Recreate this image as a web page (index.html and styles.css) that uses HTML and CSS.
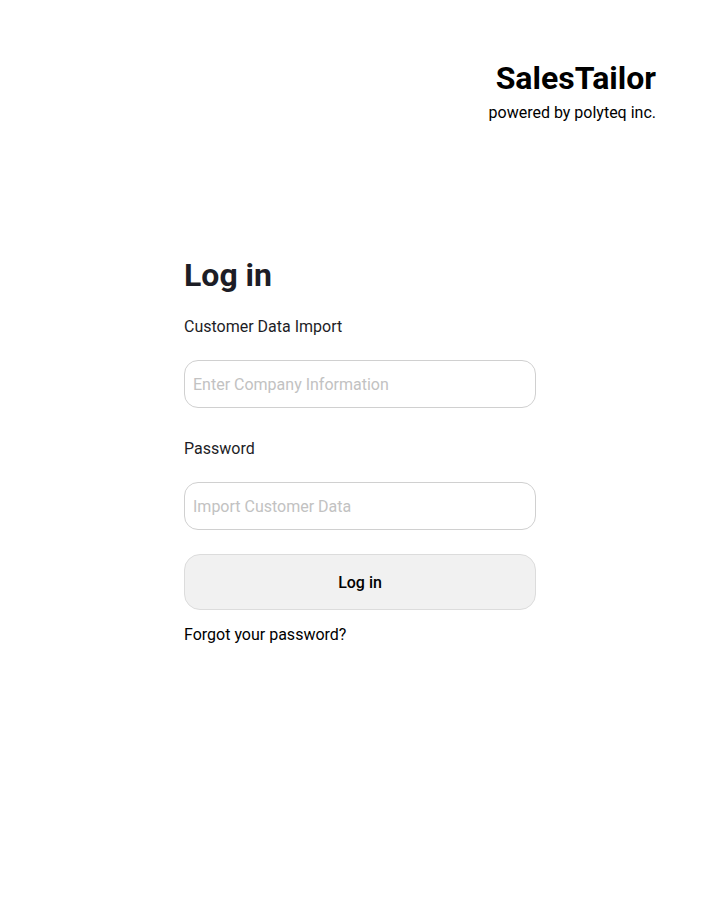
FILE: index.html
```html
<!DOCTYPE html>
<html lang="en">
<head>
<meta charset="utf-8">
<title>SalesTailor - Log in</title>
<link rel="stylesheet" href="styles.css">
</head>
<body>
<header class="brand">
  <div class="brand-name">SalesTailor</div>
  <div class="brand-sub">powered by polyteq inc.</div>
</header>
<main class="login">
  <h1 class="login-title">Log in</h1>
  <form class="login-form">
    <label class="field-label" for="company">Customer Data Import</label>
    <input class="field-input" id="company" type="text" placeholder="Enter Company Information">
    <label class="field-label field-label-second" for="password">Password</label>
    <input class="field-input" id="password" type="password" placeholder="Import Customer Data">
    <button class="login-button" type="button">Log in</button>
  </form>
  <a class="forgot" href="#">Forgot your password?</a>
</main>
</body>
</html>
```
FILE: styles.css
```css
html, body {
  margin: 0;
  padding: 0;
  background: #ffffff;
}
body {
  font-family: Roboto, "Noto Sans", Arial, sans-serif;
  color: #000;
  width: 720px;
  height: 900px;
}
.brand {
  display: flex;
  flex-direction: column;
  align-items: flex-end;
  padding: 58px 64px 0 0;
}
.brand-name {
  font-size: 32px;
  font-weight: 700;
  line-height: 40px;
}
.brand-sub {
  font-size: 16px;
  line-height: 24px;
  margin-top: 3px;
}
.login {
  width: 352px;
  margin: 0 auto;
  padding-top: 130px;
  display: flex;
  flex-direction: column;
}
.login-title {
  margin: 0;
  font-size: 32px;
  font-weight: 700;
  line-height: 40px;
  color: #1d1d26;
}
.login-form {
  display: flex;
  flex-direction: column;
  margin-top: 20px;
}
.field-label {
  font-size: 16px;
  line-height: 24px;
  color: #1d1d26;
  margin-bottom: 21px;
}
.field-label-second {
  margin-top: 29px;
}
.field-input {
  box-sizing: border-box;
  height: 48px;
  width: 100%;
  border: 1px solid #d0d0d0;
  border-radius: 14px;
  padding: 0 8px;
  font-family: inherit;
  font-size: 16px;
  color: #1d1d26;
  background: #fff;
  outline: none;
}
.field-input::placeholder {
  color: #c2c2c2;
}
.login-button {
  box-sizing: border-box;
  margin-top: 24px;
  height: 56px;
  width: 100%;
  border: 1px solid #dcdcdc;
  border-radius: 16px;
  background: #f1f1f1;
  font-family: inherit;
  font-size: 16px;
  font-weight: 500;
  color: #000;
}
.forgot {
  margin-top: 13px;
  font-size: 16px;
  line-height: 24px;
  color: #000;
  text-decoration: none;
}
```
